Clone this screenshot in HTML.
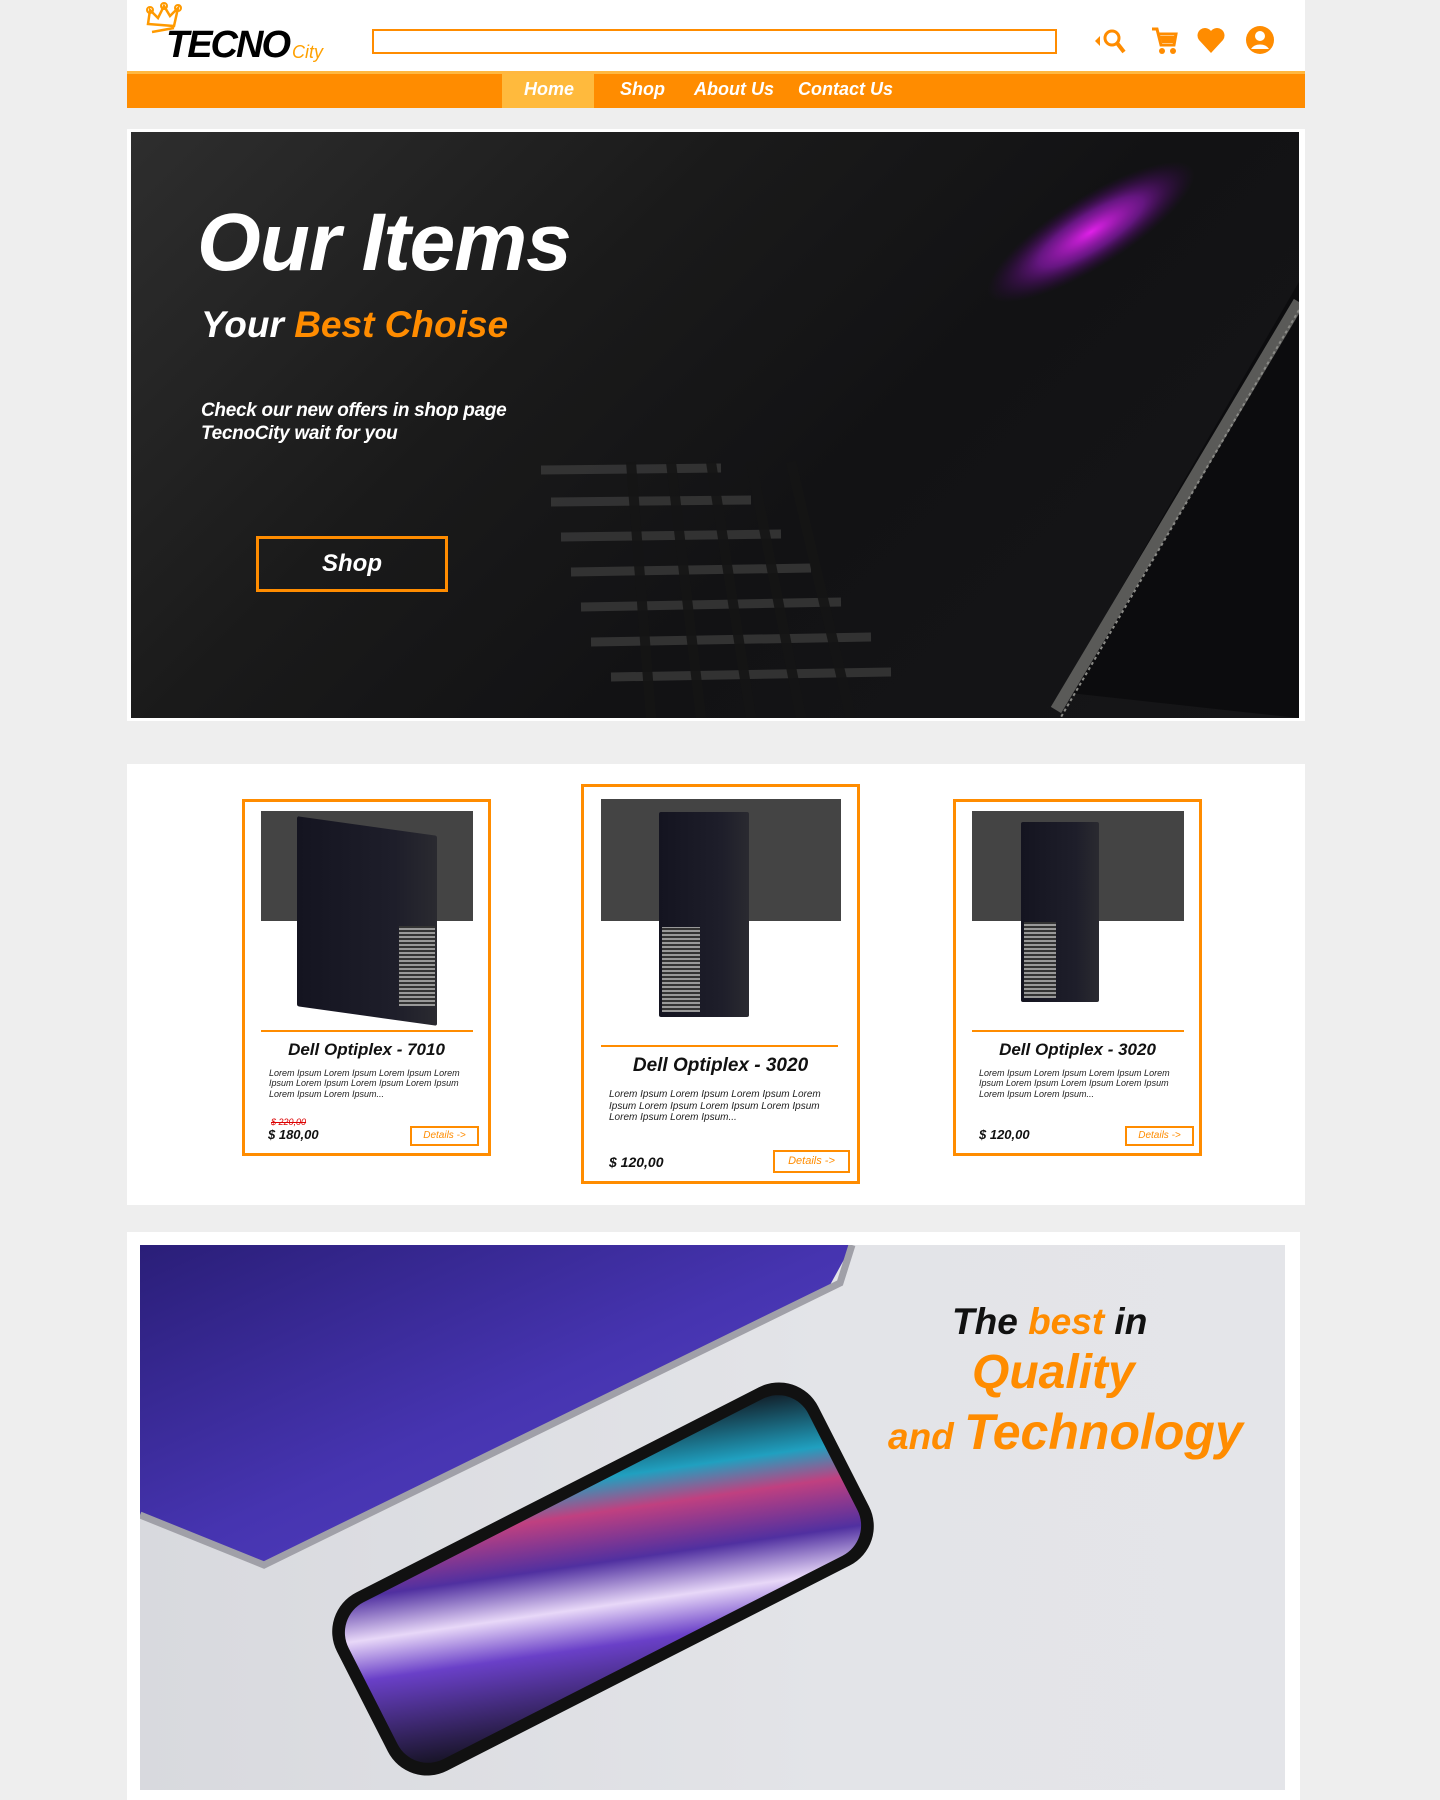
<!DOCTYPE html>
<html><head><meta charset="utf-8"><style>
*{margin:0;padding:0;box-sizing:border-box}
html,body{overflow:hidden}
body{width:1440px;height:1800px;background:#eeeeee;font-family:"Liberation Sans",Arial,sans-serif;position:relative}
.abs{position:absolute}
.it{font-style:italic;font-weight:bold}
.org{color:#ff8c00}
.card{position:absolute;background:#fff;border:3px solid #ff8c00}
.card .img{position:absolute;background:#444}
.card .line{position:absolute;height:2px;background:#ff8c00}
.card h3{position:absolute;left:0;right:0;text-align:center;font-style:italic;font-weight:bold;color:#111}
.card p{position:absolute;font-style:italic;color:#222;line-height:1.15}
.card .price{position:absolute;font-style:italic;font-weight:bold;color:#111}
.card .det{position:absolute;border:2px solid #ff8c00;color:#ff8c00;font-style:italic;text-align:center}
.pc{position:absolute;background:linear-gradient(90deg,#141420,#1e1e2a 70%,#2a2a30);border-radius:2px}
.mesh{position:absolute;background:repeating-linear-gradient(0deg,#999 0 2px,#333 2px 4px),#777;}
</style></head><body>
<!-- header -->
<div class="abs" style="left:127px;top:0;width:1178px;height:72px;background:#fff"></div>
<svg class="abs" style="left:142px;top:2px" width="44" height="40" viewBox="0 0 44 40"><path d="M6 22 L8 8 L16 16 L22 4 L28 14 L36 6 L32 24 Z M10 30 L32 26" fill="none" stroke="#ff9a00" stroke-width="2.5"/><circle cx="8" cy="8" r="3" fill="none" stroke="#ff9a00" stroke-width="2"/><circle cx="22" cy="4" r="3" fill="none" stroke="#ff9a00" stroke-width="2"/><circle cx="36" cy="6" r="3" fill="none" stroke="#ff9a00" stroke-width="2"/></svg>
<div class="abs it" style="left:166px;top:24px;font-size:38px;color:#000;letter-spacing:-2px">TECNO</div>
<div class="abs it" style="left:292px;top:42px;font-size:18px;color:#ffa000;font-weight:normal">City</div>
<div class="abs" style="left:372px;top:29px;width:685px;height:25px;border:2px solid #ff8c00;background:#fff"></div>
<!-- icons -->
<svg class="abs" style="left:1092px;top:26px" width="44" height="30" viewBox="0 0 44 30"><path d="M3 15 L8 10 L8 20 Z" fill="#ff8c00"/><circle cx="20" cy="12" r="7" fill="none" stroke="#ff8c00" stroke-width="3"/><path d="M25 17 L32 26" stroke="#ff8c00" stroke-width="4"/></svg>
<svg class="abs" style="left:1150px;top:26px" width="28" height="30" viewBox="0 0 28 30"><path d="M2 3 H7 L11 19 H24 L26 8 H9" fill="none" stroke="#ff8c00" stroke-width="3"/><path d="M10 10 H25 L23 17 H12Z" fill="#ff8c00"/><circle cx="12" cy="25" r="3" fill="#ff8c00"/><circle cx="23" cy="25" r="3" fill="#ff8c00"/></svg>
<svg class="abs" style="left:1196px;top:26px" width="30" height="28" viewBox="0 0 30 28"><path d="M15 27 L3 14 A7 7 0 0 1 15 5 A7 7 0 0 1 27 14 Z" fill="#ff8c00"/></svg>
<svg class="abs" style="left:1245px;top:25px" width="30" height="30" viewBox="0 0 30 30"><circle cx="15" cy="15" r="14" fill="#ff8c00"/><circle cx="15" cy="11" r="5" fill="#fff"/><path d="M6 24 A10 8 0 0 1 24 24 Z" fill="#fff"/></svg>
<!-- nav -->
<div class="abs" style="left:127px;top:71px;width:1178px;height:37px;background:#ff8c00;border-top:3px solid #ffb840"></div>
<div class="abs" style="left:502px;top:74px;width:92px;height:34px;background:#ffba3d"></div>
<div class="abs it" style="left:524px;top:79px;font-size:18px;color:#fff">Home</div>
<div class="abs it" style="left:620px;top:79px;font-size:18px;color:#fff">Shop</div>
<div class="abs it" style="left:694px;top:79px;font-size:18px;color:#fff">About Us</div>
<div class="abs it" style="left:798px;top:79px;font-size:18px;color:#fff">Contact Us</div>
<!-- hero -->
<div class="abs" style="left:127px;top:129px;width:1178px;height:592px;background:#fff"></div>
<div class="abs" style="left:131px;top:132px;width:1168px;height:586px;overflow:hidden;background:linear-gradient(135deg,#2e2e2e 0%,#1a1a1a 35%,#121214 60%,#161618 100%)">
  <svg class="abs" style="left:0;top:0" width="1168" height="586" viewBox="0 0 1168 586">
    <defs><radialGradient id="g" cx="50%" cy="50%" r="50%"><stop offset="0" stop-color="#e020e8"/><stop offset=".5" stop-color="#8a18b0" stop-opacity=".7"/><stop offset="1" stop-color="#400060" stop-opacity="0"/></radialGradient></defs>
    <path d="M1168 0 L1168 150 L930 560 L1168 586 Z" fill="#0c0c0e"/>
    <ellipse cx="960" cy="100" rx="120" ry="35" transform="rotate(-32 960 100)" fill="url(#g)"/>
    <path d="M1168 170 L925 578" stroke="#5a5a58" stroke-width="12"/>
    <path d="M1168 178 L930 585" stroke="#8a8a86" stroke-width="2" stroke-dasharray="3 3"/>
    <g stroke="#3a3a3a" stroke-width="9" opacity=".8">
      <path d="M480 545 L760 540"/><path d="M460 510 L740 505"/><path d="M450 475 L710 470"/><path d="M440 440 L680 436"/><path d="M430 405 L650 402"/><path d="M420 370 L620 368"/><path d="M410 338 L590 336"/>
    </g>
    <g stroke="#151515" stroke-width="10" opacity=".9">
      <path d="M500 330 L520 586"/><path d="M540 330 L570 586"/><path d="M580 330 L620 586"/><path d="M620 330 L670 586"/><path d="M660 330 L720 586"/>
    </g>
  </svg>
  <div class="abs it" style="left:66px;top:64px;font-size:82px;color:#fff;letter-spacing:-1px">Our Items</div>
  <div class="abs it" style="left:70px;top:172px;font-size:37px;color:#fff">Your <span class="org">Best Choise</span></div>
  <div class="abs it" style="left:70px;top:268px;font-size:19px;color:#fff;line-height:1.2;letter-spacing:-.3px">Check our new offers in shop page<br>TecnoCity wait for you</div>
  <div class="abs it" style="left:125px;top:404px;width:192px;height:56px;border:3px solid #ff8c00;color:#fff;font-size:24px;text-align:center;line-height:50px">Shop</div>
</div>
<!-- products -->
<div class="abs" style="left:127px;top:764px;width:1178px;height:441px;background:#fff"></div>
<div class="card" style="left:242px;top:799px;width:249px;height:357px">
  <div class="img" style="left:16px;top:9px;width:212px;height:110px"></div>
  <div class="pc" style="left:52px;top:24px;width:140px;height:190px;transform:skewY(8deg)"></div>
  <div class="mesh" style="left:154px;top:124px;width:36px;height:80px"></div>
  <div class="line" style="left:16px;top:228px;width:212px"></div>
  <h3 style="top:238px;font-size:17px">Dell Optiplex - 7010</h3>
  <p style="left:24px;top:266px;font-size:9px;width:200px">Lorem Ipsum Lorem Ipsum Lorem Ipsum Lorem Ipsum Lorem Ipsum Lorem Ipsum Lorem Ipsum Lorem Ipsum Lorem Ipsum...</p>
  <div class="abs it" style="left:26px;top:315px;font-size:9px;color:#d00;text-decoration:line-through;font-weight:normal">$ 220,00</div>
  <div class="price" style="left:23px;top:325px;font-size:13px">$ 180,00</div>
  <div class="det" style="left:165px;top:324px;width:69px;height:20px;font-size:10px;line-height:16px">Details -&gt;</div>
</div>
<div class="card" style="left:581px;top:784px;width:279px;height:400px">
  <div class="img" style="left:17px;top:12px;width:240px;height:122px"></div>
  <div class="pc" style="left:75px;top:25px;width:90px;height:205px"></div>
  <div class="mesh" style="left:78px;top:140px;width:38px;height:85px"></div>
  <div class="line" style="left:17px;top:258px;width:237px"></div>
  <h3 style="top:268px;font-size:19px">Dell Optiplex - 3020</h3>
  <p style="left:25px;top:302px;font-size:10px;width:230px">Lorem Ipsum Lorem Ipsum Lorem Ipsum Lorem Ipsum Lorem Ipsum Lorem Ipsum Lorem Ipsum Lorem Ipsum Lorem Ipsum...</p>
  <div class="price" style="left:25px;top:367px;font-size:14px">$ 120,00</div>
  <div class="det" style="left:189px;top:363px;width:77px;height:23px;font-size:11px;line-height:19px">Details -&gt;</div>
</div>
<div class="card" style="left:953px;top:799px;width:249px;height:357px">
  <div class="img" style="left:16px;top:9px;width:212px;height:110px"></div>
  <div class="pc" style="left:65px;top:20px;width:78px;height:180px"></div>
  <div class="mesh" style="left:68px;top:120px;width:32px;height:76px"></div>
  <div class="line" style="left:16px;top:228px;width:212px"></div>
  <h3 style="top:238px;font-size:17px">Dell Optiplex - 3020</h3>
  <p style="left:23px;top:266px;font-size:9px;width:200px">Lorem Ipsum Lorem Ipsum Lorem Ipsum Lorem Ipsum Lorem Ipsum Lorem Ipsum Lorem Ipsum Lorem Ipsum Lorem Ipsum...</p>
  <div class="price" style="left:23px;top:325px;font-size:13px">$ 120,00</div>
  <div class="det" style="left:169px;top:324px;width:69px;height:20px;font-size:10px;line-height:16px">Details -&gt;</div>
</div>
<!-- bottom -->
<div class="abs" style="left:127px;top:1232px;width:1173px;height:568px;background:#fff"></div>
<div class="abs" style="left:140px;top:1245px;width:1145px;height:545px;overflow:hidden;background:linear-gradient(90deg,#d8d9de,#e3e4e8 60%,#e4e5e9)">
  <svg class="abs" style="left:0;top:0" width="1145" height="545" viewBox="0 0 1145 545">
    <defs>
      <linearGradient id="lp" x1="0" y1="0" x2="1" y2="1"><stop offset="0" stop-color="#2a1e78"/><stop offset=".5" stop-color="#4634b0"/><stop offset="1" stop-color="#5a46c8"/></linearGradient>
      <linearGradient id="sc" x1="0" y1="1" x2="1" y2="0"><stop offset="0" stop-color="#101018"/><stop offset=".3" stop-color="#6a40c8"/><stop offset=".42" stop-color="#e8d8f8"/><stop offset=".55" stop-color="#5030a0"/><stop offset=".7" stop-color="#c04080"/><stop offset=".8" stop-color="#20a0c0"/><stop offset="1" stop-color="#101018"/></linearGradient>
    </defs>
    <path d="M0 0 H712 L690 40 L124 320 L0 270 Z" fill="url(#lp)"/>
    <path d="M0 270 L124 320 L700 38 L712 0" fill="none" stroke="#a0a0a8" stroke-width="7"/>
    <g transform="translate(463 334) rotate(-27)">
      <rect x="-270" y="-100" width="540" height="200" rx="44" fill="#111"/>
      <rect x="-258" y="-88" width="516" height="176" rx="34" fill="url(#sc)"/>
    </g>
  </svg>
  <div class="abs it" style="left:812px;top:56px;font-size:37px;color:#111">The <span class="org">best</span> in</div>
  <div class="abs it org" style="left:832px;top:100px;font-size:48px">Quality</div>
  <div class="abs it org" style="left:748px;top:158px;font-size:37px">and <span style="font-size:50px">Technology</span></div>
</div>
</body></html>
